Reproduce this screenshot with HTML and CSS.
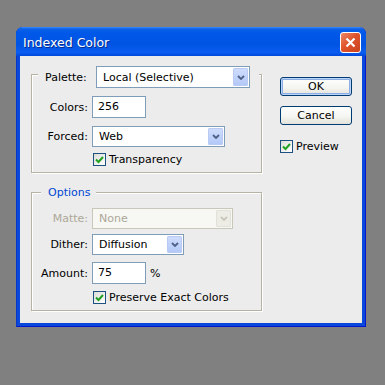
FILE: index.html
```html
<!doctype html>
<html>

<head>
    <title>Indexed Color</title>
    <link rel="stylesheet" href="styles.css">
</head>

<body>

    <div class="dialog">
        <div class="titlebar">
            <span class="title">Indexed Color</span>
            <span class="close">
                <svg width="11" height="11" viewBox="0 0 11 11">
                    <path d="M1.5 1.5 L9.5 9.5 M9.5 1.5 L1.5 9.5" stroke="#fff" stroke-width="2.2" fill="none"/>
                </svg>
            </span>
        </div>

        <div class="content">
            <div class="left">

                <!-- Palette -->
                <div class="group group-palette">
                    <div class="legend legend-select">
                        <span class="legend-label">Palette:</span>
                        <div class="select select-palette">
                            <span class="select-text">Local (Selective)</span>
                            <span class="arrow"><svg width="8" height="5" viewBox="0 0 8 5"><path d="M1 1 L4 4 L7 1" stroke="#4d6185" stroke-width="1.8" fill="none"/></svg></span>
                        </div>
                    </div>
                    <div class="row row-colors">
                        <span class="label">Colors:</span>
                        <div class="textbox">256</div>
                    </div>
                    <div class="row row-forced">
                        <span class="label">Forced:</span>
                        <div class="select select-forced">
                            <span class="select-text">Web</span>
                            <span class="arrow"><svg width="8" height="5" viewBox="0 0 8 5"><path d="M1 1 L4 4 L7 1" stroke="#4d6185" stroke-width="1.8" fill="none"/></svg></span>
                        </div>
                    </div>
                    <div class="check-row row-transp">
                        <span class="checkbox"><svg width="9" height="8" viewBox="0 0 9 8"><path d="M1 3.5 L3.5 6 L8 1" stroke="#21a121" stroke-width="2" fill="none"/></svg></span>
                        <span>Transparency</span>
                    </div>
                </div>

                <!-- Options -->
                <div class="group group-options">
                    <div class="legend legend-text">Options</div>
                    <div class="row row-matte disabled">
                        <span class="label">Matte:</span>
                        <div class="select select-matte">
                            <span class="select-text">None</span>
                            <span class="arrow"><svg width="8" height="5" viewBox="0 0 8 5"><path d="M1 1 L4 4 L7 1" stroke="#c9c7ba" stroke-width="1.8" fill="none"/></svg></span>
                        </div>
                    </div>
                    <div class="row row-dither">
                        <span class="label">Dither:</span>
                        <div class="select select-dither">
                            <span class="select-text">Diffusion</span>
                            <span class="arrow"><svg width="8" height="5" viewBox="0 0 8 5"><path d="M1 1 L4 4 L7 1" stroke="#4d6185" stroke-width="1.8" fill="none"/></svg></span>
                        </div>
                    </div>
                    <div class="row row-amount">
                        <span class="label">Amount:</span>
                        <div class="textbox">75</div>
                        <span class="unit">%</span>
                    </div>
                    <div class="check-row row-preserve">
                        <span class="checkbox"><svg width="9" height="8" viewBox="0 0 9 8"><path d="M1 3.5 L3.5 6 L8 1" stroke="#21a121" stroke-width="2" fill="none"/></svg></span>
                        <span>Preserve Exact Colors</span>
                    </div>
                </div>
            </div>

            <div class="right">
                <div class="button button-default">OK</div>
                <div class="button">Cancel</div>
                <div class="check-row row-preview">
                    <span class="checkbox"><svg width="9" height="8" viewBox="0 0 9 8"><path d="M1 3.5 L3.5 6 L8 1" stroke="#21a121" stroke-width="2" fill="none"/></svg></span>
                    <span>Preview</span>
                </div>
            </div>
        </div>
    </div>

</body>

</html>
```

FILE: styles.css
```css
body {
    margin: 0;
    background-color: #808080;
    font-family: "DejaVu Sans", sans-serif;
    font-size: 11px;
    color: #000;
}

.dialog {
    width: 350px;
    height: 300px;
    margin: 27px 0 0 16px;
    background-color: #0a48dc;
    border-radius: 7px 7px 0 0;
    box-shadow: inset 1px 0 0 #0836c8, inset -1px -1px 0 #0019cf;
    display: flex;
    flex-direction: column;
}

/* title bar */
.titlebar {
    height: 29px;
    display: flex;
    align-items: center;
    justify-content: space-between;
    padding: 0 5px 0 7px;
    border-radius: 7px 7px 0 0;
    background: linear-gradient(180deg, #3d8cf6 0, #0b60e8 2px, #0058e9 6px, #0054e3 60%, #0a5df0 88%, #0049da 100%);
}

.title {
    color: #fff;
    font-size: 12.5px;
    padding-top: 2px;
    text-shadow: 1px 1px 0 #0a2a8a;
}

.close {
    width: 19px;
    height: 19px;
    border: 1px solid #fff;
    border-radius: 3px;
    background: linear-gradient(135deg, #ea8a68 0, #e0542c 45%, #c9421f 100%);
    display: flex;
    align-items: center;
    justify-content: center;
    margin-top: 1px;
}

/* content */
.content {
    flex: 1;
    margin: 0 4px 4px 4px;
    background-color: #ececec;
    display: flex;
    padding: 18px 0 0 11px;
}

.left {
    width: 231px;
}

.right {
    width: 72px;
    margin: 3px 0 0 18px;
}

/* group boxes */
.group {
    border: 1px solid #b6b3a5;
    box-shadow: inset 1px 1px 0 #fff, 1px 1px 0 #fff;
}

.group-palette {
    height: 97px;
}

.group-options {
    margin-top: 19px;
    height: 117px;
}

.legend {
    background-color: #ececec;
    width: fit-content;
}

.legend-select {
    display: flex;
    align-items: center;
    margin: -9px 0 0 6px;
    padding: 0 9px 0 7px;
    height: 22px;
}

.legend-label {
    width: 51px;
}

.legend-text {
    margin: -7px 0 0 9px;
    padding: 0 6px 0 7px;
    height: 13px;
    line-height: 13px;
    color: #0046d5;
}

.row {
    display: flex;
    align-items: center;
}

.label {
    width: 56px;
    margin-right: 4px;
    text-align: right;
}

.row-colors { margin-top: 8px; }
.row-forced { margin-top: 8px; }
.row-matte { margin-top: 9px; }
.row-dither { margin-top: 5px; }
.row-amount { margin-top: 7px; }

.disabled .label {
    color: #aca899;
}

/* text boxes */
.textbox {
    width: 47px;
    height: 20px;
    line-height: 20px;
    padding-left: 5px;
    border: 1px solid #7f9db9;
    background-color: #fff;
}

.unit {
    margin-left: 4px;
}

/* drop downs */
.select {
    height: 17px;
    border: 1px solid #7f9db9;
    background-color: #fff;
    display: flex;
    align-items: center;
    justify-content: space-between;
    padding: 1px;
}

.select-text {
    padding-left: 5px;
}

.select-palette { width: 150px; height: 18px; }
.select-forced { width: 129px; }
.select-matte { width: 137px; }
.select-dither { width: 88px; }

.arrow {
    width: 15px;
    align-self: stretch;
    border-radius: 2px;
    background: linear-gradient(180deg, #d0dcfb 0, #c1d3fb 50%, #b2c7f6 100%);
    box-shadow: inset 0 0 0 1px #b9cbf5;
    display: flex;
    align-items: center;
    justify-content: center;
}

.select-matte {
    border-color: #c9c7ba;
    background-color: #f7f7f4;
}

.select-matte .select-text {
    color: #aca899;
}

.select-matte .arrow {
    background: #eeede5;
    box-shadow: inset 0 0 0 1px #e2e1d9;
}

/* check boxes */
.check-row {
    display: flex;
    align-items: center;
    height: 13px;
}

.row-transp,
.row-preserve {
    margin-left: 61px;
}

.row-transp { margin-top: 6px; }
.row-preserve { margin-top: 7px; }

.row-preview {
    margin-top: 15px;
}

.checkbox {
    width: 11px;
    height: 11px;
    border: 1px solid #1c5180;
    background: linear-gradient(135deg, #dcdcd7 0, #fff 100%);
    display: flex;
    align-items: center;
    justify-content: center;
    margin-right: 3px;
}

/* buttons */
.button {
    height: 17px;
    line-height: 17px;
    text-align: center;
    border: 1px solid #003c74;
    border-radius: 3px;
    background: linear-gradient(180deg, #fff 0, #f4f4f0 60%, #e3e2da 100%);
    margin-bottom: 10px;
}

.button-default {
    box-shadow: inset 0 0 0 1px #bcd4f6, inset 0 0 0 2px #89ade4;
}
```
